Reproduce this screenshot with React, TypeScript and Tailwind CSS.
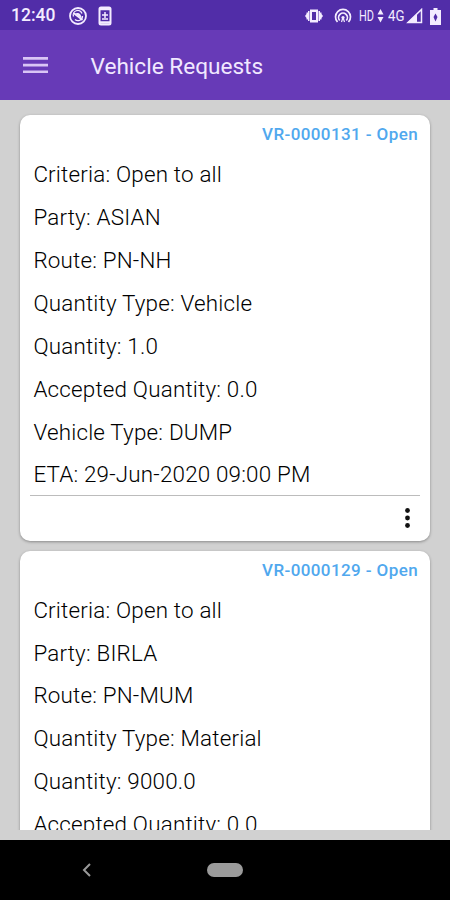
type Request = { id: string; status: string; fields: [string, string][] };

const requests: Request[] = [
  {
    id: 'VR-0000131',
    status: 'Open',
    fields: [
      ['Criteria', 'Open to all'],
      ['Party', 'ASIAN'],
      ['Route', 'PN-NH'],
      ['Quantity Type', 'Vehicle'],
      ['Quantity', '1.0'],
      ['Accepted Quantity', '0.0'],
      ['Vehicle Type', 'DUMP'],
      ['ETA', '29-Jun-2020 09:00 PM'],
    ],
  },
  {
    id: 'VR-0000129',
    status: 'Open',
    fields: [
      ['Criteria', 'Open to all'],
      ['Party', 'BIRLA'],
      ['Route', 'PN-MUM'],
      ['Quantity Type', 'Material'],
      ['Quantity', '9000.0'],
      ['Accepted Quantity', '0.0'],
    ],
  },
];

function StatusBar() {
  return (
    <div className="flex h-[30px] shrink-0 items-center bg-[#512da8] pl-[11px] pr-[9px] pt-[2px] text-[#f3ecff]">
      <span className="w-[57px] text-[17.500px] font-medium leading-none">12:40</span>
      <svg className="h-[20px] w-[20px]" viewBox="0 0 20 20" fill="none" stroke="currentColor">
        <circle cx="10" cy="10" r="8" strokeWidth="1.800" />
        <path d="M5.500 10.500a4.500 4.500 0 0 1 8.500-3M14.500 10a4.500 4.500 0 0 1-7.500 3.500" strokeWidth="1.300" />
        <path d="M5.500 7 14.500 14" strokeWidth="1.600" />
        <path d="M7 7.500c3-1.500 6.500 0 6.500 5z" fill="currentColor" stroke="none" />
      </svg>
      <svg className="ml-[10px] h-[20px] w-[14px]" viewBox="0 0 14 20" fill="none" stroke="currentColor">
        <rect x="1.500" y="1.500" width="11" height="17" rx="1.500" strokeWidth="2" />
        <path d="M2 3h10M2 16.500h10" strokeWidth="2.500" />
        <path d="M7 6v6M4 9h6M4 13h6" strokeWidth="1.500" />
      </svg>
      <div className="grow" />
      <svg className="h-[16px] w-[20px]" viewBox="0 0 20 16" fill="currentColor">
        <path fillRule="evenodd" d="M6 1.500h8v13H6zM8 4v8h4V4z" />
        <path d="M5.500 3v10H4v-1.500H2.500V10L1 8l1.500-2V4.500H4V3zM14.500 3v10H16v-1.500h1.500V10L19 8l-1.500-2V4.500H16V3z" />
      </svg>
      <svg className="ml-[10px] h-[18px] w-[18px]" viewBox="0 0 18 18" fill="none" stroke="currentColor" strokeWidth="1.700">
        <path d="M3.500 15a7.500 7.500 0 1 1 11 0M5.700 13.500a4.400 4.400 0 1 1 6.600 0" />
        <circle cx="9" cy="10.500" r="1.600" fill="currentColor" stroke="none" />
        <path d="M9 10.500 7.500 15M9 10.500 10.500 15" strokeWidth="1.200" />
      </svg>
      <span className="ml-[7px] w-[17px] text-[15px] leading-none"><span className="inline-block origin-left scale-x-[0.73]">HD</span></span>
      <svg className="ml-px h-[14px] w-[7px]" viewBox="0 0 7 14" fill="currentColor">
        <path d="M3.500 0 6.500 5.500h-6zM3.500 13.500.5 8h6z" />
      </svg>
      <span className="ml-[4px] w-[18px] text-[15px] leading-none"><span className="inline-block origin-left scale-x-[0.88]">4G</span></span>
      <svg className="h-[16px] w-[17px]" viewBox="0 0 17 16">
        <path d="M15.500 1.500v13H2z" fill="none" stroke="currentColor" strokeWidth="1.500" />
        <path d="M11 6v9H1z" fill="currentColor" />
      </svg>
      <svg className="ml-[7px] h-[17px] w-[11px]" viewBox="0 0 11 17" fill="currentColor">
        <path fillRule="evenodd" d="M3.500 0h4v2H11v15H0V2h3.500zM5.500 5.500 3.500 9l2 4.500 2-4.500z" />
      </svg>
    </div>
  );
}

function Card({ request }: { request: Request }) {
  return (
    <section className="flex h-[425.500px] shrink-0 flex-col rounded-[10px] bg-white px-[10px] shadow-[0_1px_3px_rgba(0,0,0,0.350)]">
      <h2 className="h-[37.500px] pr-[2px] text-right text-[17px] font-medium leading-[39px] tracking-[0.400px] text-[#50a8ee]">
        {request.id} - {request.status}
      </h2>
      <div className="h-[343px] border-b border-[#bcbcbc] pl-[3.400px] pt-[0.700px]">
        {request.fields.map(([label, value]) => (
          <p key={label} className="h-[42.900px] whitespace-nowrap text-[22.400px] font-light leading-[43px] tracking-[0.190px] text-black">
            {label}: {value}
          </p>
        ))}
      </div>
      <div className="flex grow items-center justify-end pr-[10px]">
        <svg className="h-[20px] w-[5px]" viewBox="0 0 5 20" fill="#111">
          <circle cx="2.500" cy="2.500" r="2.400" />
          <circle cx="2.500" cy="10" r="2.400" />
          <circle cx="2.500" cy="17.500" r="2.400" />
        </svg>
      </div>
    </section>
  );
}

export default function App() {
  return (
    <div className="flex h-[900px] w-[450px] flex-col overflow-hidden bg-[#d1d1d1] font-['Roboto',sans-serif]">
      <StatusBar />
      <header className="flex h-[70px] shrink-0 items-center bg-[#673ab7] pl-[23px]">
        <svg className="h-[18px] w-[25px]" viewBox="0 0 25 18" fill="#d9c5f5">
          <path d="M0 1h25v2.700H0zM0 7.700h25v2.700H0zM0 14.400h25v2.700H0z" />
        </svg>
        <h1 className="ml-[42.500px] pt-[4px] text-[22.600px] leading-none text-[#f1e8ff]">Vehicle Requests</h1>
      </header>
      <main className="flex h-[730px] shrink-0 flex-col gap-[10px] overflow-hidden px-[20px] pt-[15px]">
        {requests.map((request) => (
          <Card key={request.id} request={request} />
        ))}
      </main>
      <div className="h-[10px] shrink-0" />
      <nav className="flex h-[60px] shrink-0 items-center bg-black pl-[82px]">
        <svg className="h-[14px] w-[10px]" viewBox="0 0 10 14" fill="none" stroke="#999" strokeWidth="2">
          <path d="M8 1 2 7l6 6" />
        </svg>
        <div className="ml-[115px] h-[14px] w-[36px] rounded-full bg-[#9b9b9b]" />
      </nav>
    </div>
  );
}
